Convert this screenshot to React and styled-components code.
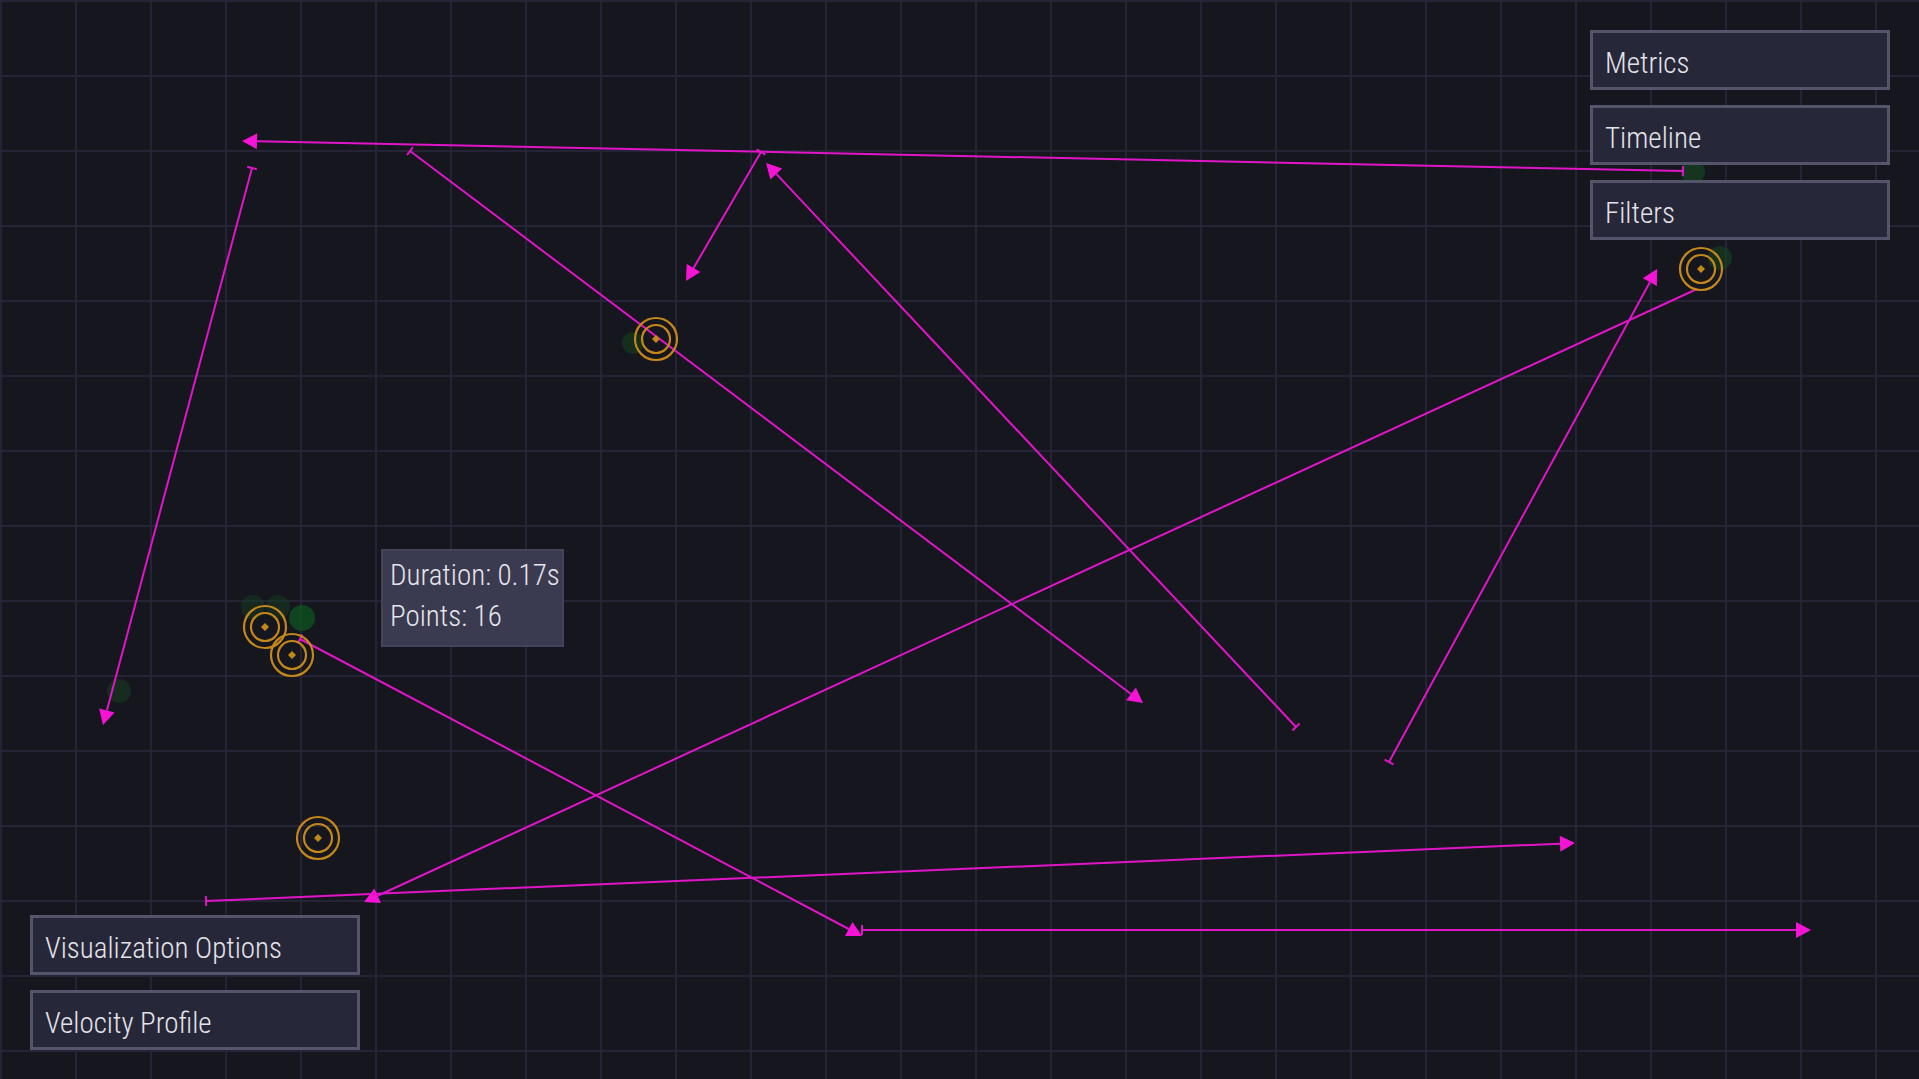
import React from "react";
import styled, { createGlobalStyle } from "styled-components";

const GlobalStyle = createGlobalStyle`
  html, body { margin: 0; padding: 0; }
  body {
    background: #16161f;
    font-family: "Liberation Sans Narrow", "Roboto Condensed", "DejaVu Sans Condensed", sans-serif;
    font-weight: 300;
    overflow: hidden;
  }
`;

// strokes drawn on the analysis canvas (tee at start, arrowhead at end)
const strokes = [
  { from: [1683, 171], to: [242, 141], tee: true },
  { from: [252, 168], to: [103, 725], tee: true },
  { from: [410, 151], to: [1143, 703], tee: true },
  { from: [761, 152], to: [686, 281], tee: true },
  { from: [1296, 727], to: [766, 163], tee: true },
  { from: [1389, 762], to: [1657, 269], tee: true },
  { from: [1697, 289], to: [364, 902], tee: false },
  { from: [206, 901], to: [1575, 843], tee: true },
  { from: [300, 639], to: [862, 936], tee: true },
  { from: [862, 930], to: [1811, 930], tee: true },
];

const targets = [
  [656, 339],
  [265, 627],
  [292, 655],
  [318, 838],
  [1701, 269],
];

const blobs = [
  { x: 633, y: 343, r: 11, c: "rgba(20, 70, 30, 0.5)" },
  { x: 253, y: 607, r: 12, c: "rgba(20, 70, 30, 0.4)" },
  { x: 278, y: 607, r: 12, c: "rgba(20, 70, 30, 0.4)" },
  { x: 302, y: 618, r: 13, c: "rgba(12, 90, 30, 0.7)" },
  { x: 119, y: 691, r: 12, c: "rgba(20, 70, 30, 0.45)" },
  { x: 1693, y: 172, r: 12, c: "rgba(20, 80, 30, 0.55)" },
  { x: 1720, y: 258, r: 12, c: "rgba(20, 80, 30, 0.45)" },
];

const MAGENTA = "#e015c8";
const AMBER = "#c4871a";

function Stroke({ from, to, tee }) {
  const [x1, y1] = from;
  const [x2, y2] = to;
  const dx = x2 - x1;
  const dy = y2 - y1;
  const len = Math.hypot(dx, dy);
  const ux = dx / len;
  const uy = dy / len;
  const px = -uy;
  const py = ux;
  const head = 15;
  const half = 8;
  const bx = x2 - ux * head;
  const by = y2 - uy * head;
  const pts = `${x2},${y2} ${bx + px * half},${by + py * half} ${bx - px * half},${by - py * half}`;
  return (
    <g>
      <line x1={x1} y1={y1} x2={bx} y2={by} stroke={MAGENTA} strokeWidth="2" />
      <polygon points={pts} fill="#f514d6" />
      {tee && (
        <line
          x1={x1 + px * 5}
          y1={y1 + py * 5}
          x2={x1 - px * 5}
          y2={y1 - py * 5}
          stroke={MAGENTA}
          strokeWidth="2"
        />
      )}
    </g>
  );
}

function Target({ x, y }) {
  return (
    <g>
      <circle cx={x} cy={y} r="21" fill="none" stroke={AMBER} strokeWidth="2.2" />
      <circle cx={x} cy={y} r="14" fill="none" stroke={AMBER} strokeWidth="2.2" />
      <polygon points={`${x},${y - 4} ${x + 4},${y} ${x},${y + 4} ${x - 4},${y}`} fill={AMBER} />
    </g>
  );
}

export default function App() {
  return (
    <>
      <GlobalStyle />
      <Stage>
        <Canvas width="1919" height="1079" viewBox="0 0 1919 1079">
          {blobs.map((b, i) => (
            <circle key={i} cx={b.x} cy={b.y} r={b.r} fill={b.c} />
          ))}
          {strokes.map((s, i) => (
            <Stroke key={i} {...s} />
          ))}
          {targets.map(([x, y], i) => (
            <Target key={i} x={x} y={y} />
          ))}
        </Canvas>

        <Tooltip>
          <div>Duration: 0.17s</div>
          <div>Points: 16</div>
        </Tooltip>

        <PanelStack $side="right">
          <PanelButton $w={300}>Metrics</PanelButton>
          <PanelButton $w={300}>Timeline</PanelButton>
          <PanelButton $w={300}>Filters</PanelButton>
        </PanelStack>

        <PanelStack $side="left">
          <PanelButton $w={330}>Visualization Options</PanelButton>
          <PanelButton $w={330}>Velocity Profile</PanelButton>
        </PanelStack>
      </Stage>
    </>
  );
}

const Stage = styled.div`
  position: relative;
  width: 100vw;
  height: 100vh;
  background-color: #16161f;
  background-image:
    linear-gradient(to right, #242436 0, #242436 2px, transparent 2px),
    linear-gradient(to bottom, #242436 0, #242436 2px, transparent 2px);
  background-size: 75px 75px;
  overflow: hidden;
`;

const Canvas = styled.svg`
  position: absolute;
  inset: 0;
  display: block;
`;

const PanelStack = styled.div`
  position: absolute;
  display: flex;
  flex-direction: column;
  gap: 15px;
  ${(p) => (p.$side === "right" ? "top: 30px; right: 29px;" : "bottom: 29px; left: 30px;")}
`;

const PanelButton = styled.button`
  box-sizing: border-box;
  width: ${(p) => p.$w}px;
  height: 60px;
  padding: 6px 12px 0;
  display: flex;
  align-items: center;
  background: #27273a;
  border: 3px solid #54546a;
  border-radius: 0;
  color: #e4e4e8;
  font-family: inherit;
  font-weight: 300;
  font-size: 29px;
  text-align: left;
  cursor: pointer;
`;

const Tooltip = styled.div`
  position: absolute;
  left: 381px;
  top: 549px;
  box-sizing: border-box;
  width: 183px;
  height: 98px;
  padding: 4px 7px 0;
  background: #3a3a50;
  border: 2px solid #444459;
  color: #e6e6ea;
  font-size: 29px;
  line-height: 41px;
  white-space: nowrap;
`;
